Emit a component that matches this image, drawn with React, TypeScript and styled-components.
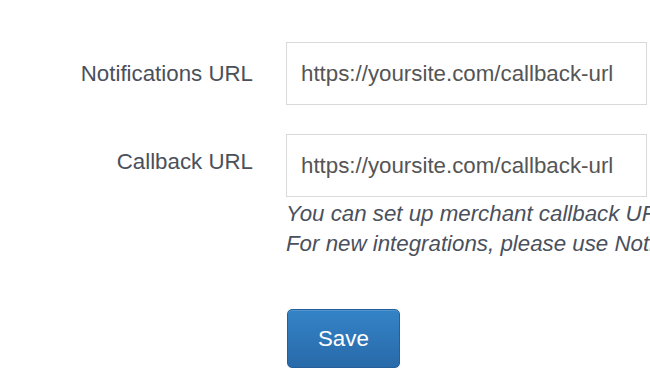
import styled, { createGlobalStyle } from 'styled-components';

const GlobalStyle = createGlobalStyle`
  html, body {
    margin: 0;
    padding: 0;
    overflow: hidden;
    background: #fff;
  }
  body {
    font-family: "Liberation Sans", Arial, sans-serif;
    font-size: 22.3px;
    line-height: 30px;
    color: #555;
  }
`;

const Form = styled.form`
  padding-top: 42px;
  width: 650px;
`;

const Row = styled.div`
  display: grid;
  grid-template-columns: 253px 1fr;
  column-gap: 33px;
  margin-bottom: 29px;
`;

const Label = styled.label<{ $top: number }>`
  text-align: right;
  padding-top: ${props => props.$top}px;
  color: #4b505a;
  white-space: nowrap;
`;

const Field = styled.div`
  display: flex;
  flex-direction: column;
  min-width: 0;
`;

const Input = styled.input`
  box-sizing: border-box;
  width: 361px;
  height: 63px;
  padding: 0 14px;
  border: 1px solid #d9d9d9;
  border-radius: 0;
  font-family: inherit;
  font-size: 22.3px;
  color: #555;
  background: #fff;
  outline: none;

  &::placeholder {
    color: #555;
    opacity: 1;
  }
`;

const Help = styled.p`
  margin: 2px 0 0;
  font-style: italic;
  color: #4a505c;
  white-space: nowrap;
`;

const Actions = styled.div`
  display: grid;
  grid-template-columns: 253px auto;
  column-gap: 34px;
  justify-content: start;
  margin-top: 50px;
`;

const SaveButton = styled.button`
  box-sizing: border-box;
  height: 59px;
  padding: 0 30px;
  font-family: inherit;
  font-size: 22.3px;
  color: #fff;
  border: 1px solid #245f99;
  border-radius: 5px;
  background: linear-gradient(to bottom, #3483c7 0%, #286aa9 100%);
  box-shadow: inset 0 1px 0 rgba(255, 255, 255, 0.15), 0 1px 1px rgba(0, 0, 0, 0.08);
  cursor: pointer;
`;

export default function App() {
  return (
    <>
      <GlobalStyle />
      <Form onSubmit={e => e.preventDefault()}>
        <Row>
          <Label $top={17}>Notifications URL</Label>
          <Field>
            <Input placeholder="https://yoursite.com/callback-url" />
          </Field>
        </Row>

        <Row>
          <Label $top={13}>Callback URL</Label>
          <Field>
            <Input placeholder="https://yoursite.com/callback-url" />
            <Help>
              You can set up merchant callback URL to receive payment status updates.
              <br />
              For new integrations, please use Notifications URL instead.
            </Help>
          </Field>
        </Row>

        <Actions>
          <span />
          <SaveButton type="submit">Save</SaveButton>
        </Actions>
      </Form>
    </>
  );
}
